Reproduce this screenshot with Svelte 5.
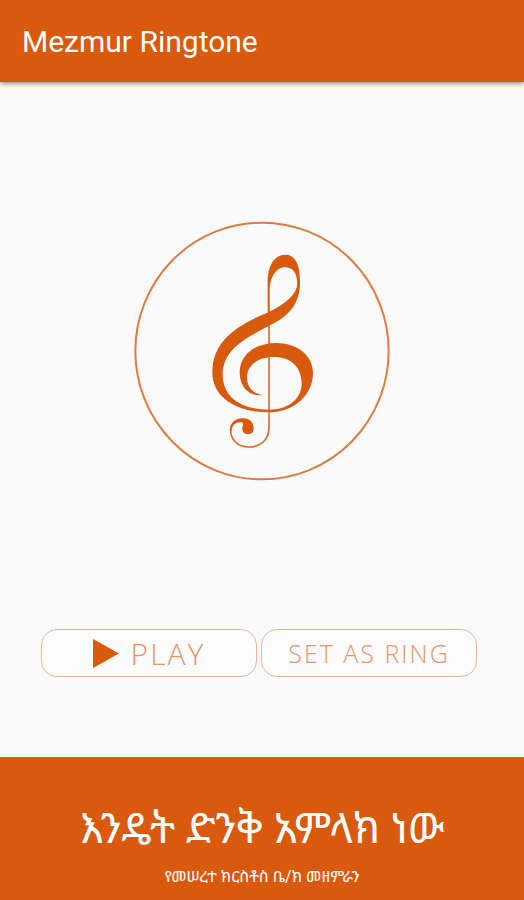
<script lang="ts">
    let playing = false;
    let ringtone = false;
</script>

<style>
    :global(body) {
        background: #fafafa;
    }

    .app {
        min-height: 100vh;
        display: flex;
        flex-direction: column;
        font-family: Roboto, "Noto Sans", "Noto Sans Ethiopic", sans-serif;
    }

    header {
        background: #d9590d;
        color: white;
        padding: 23px 22px 21px;
        box-shadow: 0 1px 5px rgba(0, 30, 20, 0.6);
    }

    h1 {
        margin: 0;
        font-size: 30px;
        line-height: 38px;
        font-weight: 400;
    }

    main {
        flex: 1;
        display: flex;
        flex-direction: column;
        justify-content: space-between;
        padding: 139px 0 80px;
    }

    .clef {
        align-self: center;
        width: 258px;
        height: 260px;
    }

    .actions {
        display: flex;
        gap: 4px;
        padding: 0 47px 0 41px;
    }

    button {
        flex: 1;
        height: 48px;
        padding: 0;
        display: flex;
        align-items: center;
        justify-content: center;
        gap: 12px;
        background: #fcfcfc;
        color: #e39468;
        border: 1px solid #ecb597;
        border-radius: 16px;
        font-family: "Open Sans", sans-serif;
        font-size: 25px;
        font-weight: 300;
        letter-spacing: 2px;
        white-space: nowrap;
        cursor: pointer;
    }

    .play {
        font-size: 30px;
    }

    .play svg {
        width: 26px;
        height: 29px;
    }

    footer {
        background: #d9590d;
        color: white;
        padding: 48px 16px 11px;
        text-align: center;
    }

    footer p {
        margin: 0;
    }

    .title {
        font-size: 42px;
        line-height: 48px;
    }

    .choir {
        margin-top: 12px;
        font-size: 16px;
        line-height: 24px;
    }
</style>

<div class="app">
    <header>
        <h1>Mezmur Ringtone</h1>
    </header>

    <main>
        <svg class="clef" viewBox="28 32 774 780" fill="none" aria-hidden="true">
            <ellipse cx="415" cy="422" rx="380" ry="385" stroke="#df7a42" stroke-width="6"/>
            <path stroke="#dd6d2c" stroke-width="5" d="M436 300V650C436 690 410 710 375 710C342 710 321 688 321 660"/>
            <path fill="#d9590d" d="M432 304V215C432 162 454 133 486 133C518 133 530 170 529 220C527 282 495 318 436 346C368 382 297 417 297 492C297 559 350 598 436 598C500 598 534 560 534 521C534 470 502 440 450 440C400 440 370 467 370 502C370 531 390 551 417 554C378 560 348 530 348 487C348 432 395 398 458 398C520 398 568 435 568 488C568 555 510 606 436 606C340 606 266 563 266 486C266 397 331 347 436 305C487 280 520 252 521 219C520 187 507 171 484 171C457 171 438 201 438 242V304Z"/>
            <path fill="#d9590d" d="M318 662C318 638 334 624 358 624C380 624 390 638 390 655C390 665 383 671 373 671C362 671 356 664 356 655C356 646 361 641 356 637C343 632 324 641 324 662Z"/>
        </svg>

        <div class="actions">
            <button class="play" aria-pressed={playing} on:click={() => playing = !playing}>
                <svg viewBox="0 0 26 29" aria-hidden="true"><path fill="#d9590d" d="M0 0L26 14.5L0 29Z"/></svg>
                PLAY
            </button>
            <button aria-pressed={ringtone} on:click={() => ringtone = true}>SET AS RING</button>
        </div>
    </main>

    <footer>
        <p class="title" lang="am">እንዴት ድንቅ አምላክ ነው</p>
        <p class="choir" lang="am">የመሠረተ ክርስቶስ ቤ/ክ መዘምራን</p>
    </footer>
</div>
